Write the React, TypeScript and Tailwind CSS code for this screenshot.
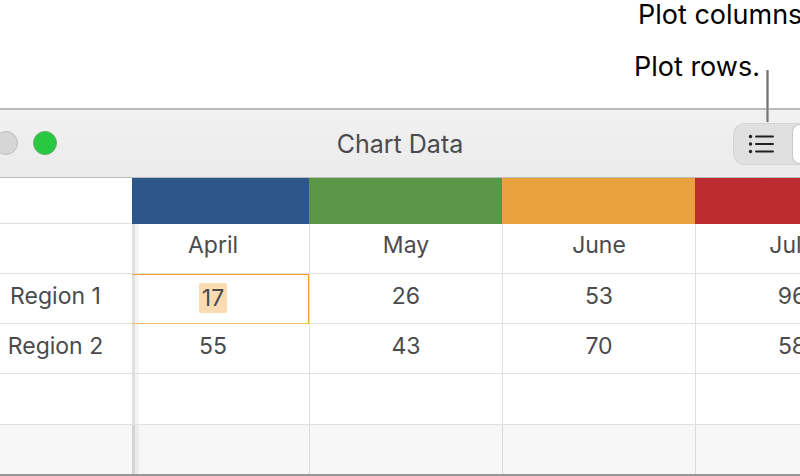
import { useState } from "react";

const columns = [
  { month: "April", swatch: "bg-[#2d5789]" },
  { month: "May", swatch: "bg-[#5b9647]" },
  { month: "June", swatch: "bg-[#e8a13d]" },
  { month: "July", swatch: "bg-[#bc2b2f]" },
];

const regions = [
  { name: "Region 1", values: ["17", "26", "53", "96"] },
  { name: "Region 2", values: ["55", "43", "70", "58"] },
];

const frozenEdge =
  "bg-[linear-gradient(to_right,#e0e0e0_3px,#f4f4f4_3px,#f4f4f4_7px,transparent_7px)]";
const line = "border-b border-[#e0e0e0]";

function edge(index: number) {
  return index === 0 ? `${frozenEdge} pr-[15px]` : "border-l";
}

function Captions() {
  return (
    <div className="relative ml-auto h-27 w-[166px] overflow-hidden text-[27px] leading-[52px] whitespace-nowrap text-black">
      <p className="-mt-[11px] pl-1">Plot columns.</p>
      <p>Plot rows.</p>
    </div>
  );
}

function Toolbar() {
  return (
    <header className="relative grid h-[70px] grid-cols-[1fr_auto_1fr] items-center border-t-2 border-b border-t-[#b9b9b9] border-b-[#bdbdbd] bg-linear-to-b from-[#f1f1f1] to-[#ebebeb] pt-px">
      <div className="-ml-[6px] flex gap-[15px] pb-0.5">
        <button type="button" aria-label="Minimize" className="size-6 rounded-full border border-[#bcbcbc] bg-[#d6d6d6]" />
        <button type="button" aria-label="Zoom" className="size-6 rounded-full border border-[#63ad67] bg-[#28c840]" />
      </div>
      <h1 className="pt-0.5 text-[25px] text-[#4b4b4d]">Chart Data</h1>
      <div className="flex justify-end overflow-hidden">
        <div className="flex h-[42px] w-[67px] shrink-0 rounded-l-xl border border-r-0 border-[#d3d3d3] bg-[#e0e0e0]">
          <button type="button" aria-label="Plot rows" className="flex w-[58px] shrink-0 items-center pl-[14px]">
            <svg viewBox="0 0 26 20" className="h-5 w-[26px]" fill="none" stroke="#202020" strokeWidth="2" strokeLinecap="round">
              <path d="M8 2.5H25M8 10H25M8 17.5H25" />
              <g fill="#202020" stroke="none">
                <circle cx="2.5" cy="2.5" r="1.7" />
                <circle cx="2.5" cy="10" r="1.7" />
                <circle cx="2.5" cy="17.5" r="1.7" />
              </g>
            </svg>
          </button>
          <button type="button" aria-label="Plot columns" className="grow rounded-l-xl border border-r-0 border-[#c8c8c8] bg-white" />
        </div>
      </div>
      <span className="absolute right-[31px] bottom-[55px] h-13 w-[3px] border-x border-[#a3a4a7] bg-[#737478]" />
    </header>
  );
}

function DataTable() {
  const [selected, setSelected] = useState("17");
  return (
    <div className="overflow-hidden border-b-2 border-[#97979a]">
      <table className="w-[888px] table-fixed border-separate border-spacing-0 text-center text-[23px] leading-[43px] text-[#4b4b4d]">
        <colgroup>
          <col className="w-[132px]" />
          <col className="w-[177px]" />
          <col className="w-[193px]" />
          <col className="w-[193px]" />
          <col className="w-[193px]" />
        </colgroup>
        <thead>
          <tr className="h-[46px]">
            <td className="border-b border-[#e0e0e0]" />
            {columns.map((c) => (
              <td key={c.month} className={c.swatch} />
            ))}
          </tr>
          <tr className="h-[50px]">
            <td className="border-b border-[#e0e0e0]" />
            {columns.map((c, i) => (
              <th key={c.month} scope="col" className={`p-0 pb-[6px] font-normal ${line} ${edge(i)}`}>
                {c.month}
              </th>
            ))}
          </tr>
        </thead>
        <tbody>
          {regions.map((region, row) => (
            <tr key={region.name} className="h-[50px]">
              <th scope="row" className="border-b border-[#e0e0e0] p-0 pr-[21px] pb-[5px] font-normal">
                {region.name}
              </th>
              {region.values.map((value, i) =>
                row === 0 && i === 0 ? (
                  <td key={i} className={`border-y border-r border-[#f7a030] border-b-[#fcbd68] p-0 pr-[14px] pb-0.5 ${frozenEdge}`}>
                    <input
                      aria-label="Region 1, April"
                      value={selected}
                      onChange={(e) => setSelected(e.target.value)}
                      className="mx-auto block h-[30px] w-7 rounded-xs bg-[#fbdcb2] p-0 text-center outline-none"
                    />
                  </td>
                ) : (
                  <td key={i} className={`p-0 pb-[5px] ${line} ${edge(i)}`}>
                    {value}
                  </td>
                ),
              )}
            </tr>
          ))}
          <tr className="h-[51px]">
            <td className="border-b border-[#e0e0e0]" />
            {columns.map((c, i) => (
              <td key={c.month} className={`${line} ${edge(i)}`} />
            ))}
          </tr>
          <tr className="h-[49px] bg-[#f7f7f7]">
            <td />
            {columns.map((c, i) => (
              <td
                key={c.month}
                className={
                  i === 0
                    ? "bg-[linear-gradient(to_right,#d4d4d4_3px,#ebebeb_3px,#ebebeb_7px,transparent_7px)]"
                    : "border-l border-[#dadada]"
                }
              />
            ))}
          </tr>
        </tbody>
      </table>
    </div>
  );
}

export default function App() {
  return (
    <main className="overflow-hidden bg-white font-['Inter',sans-serif]">
      <Captions />
      <Toolbar />
      <DataTable />
    </main>
  );
}
